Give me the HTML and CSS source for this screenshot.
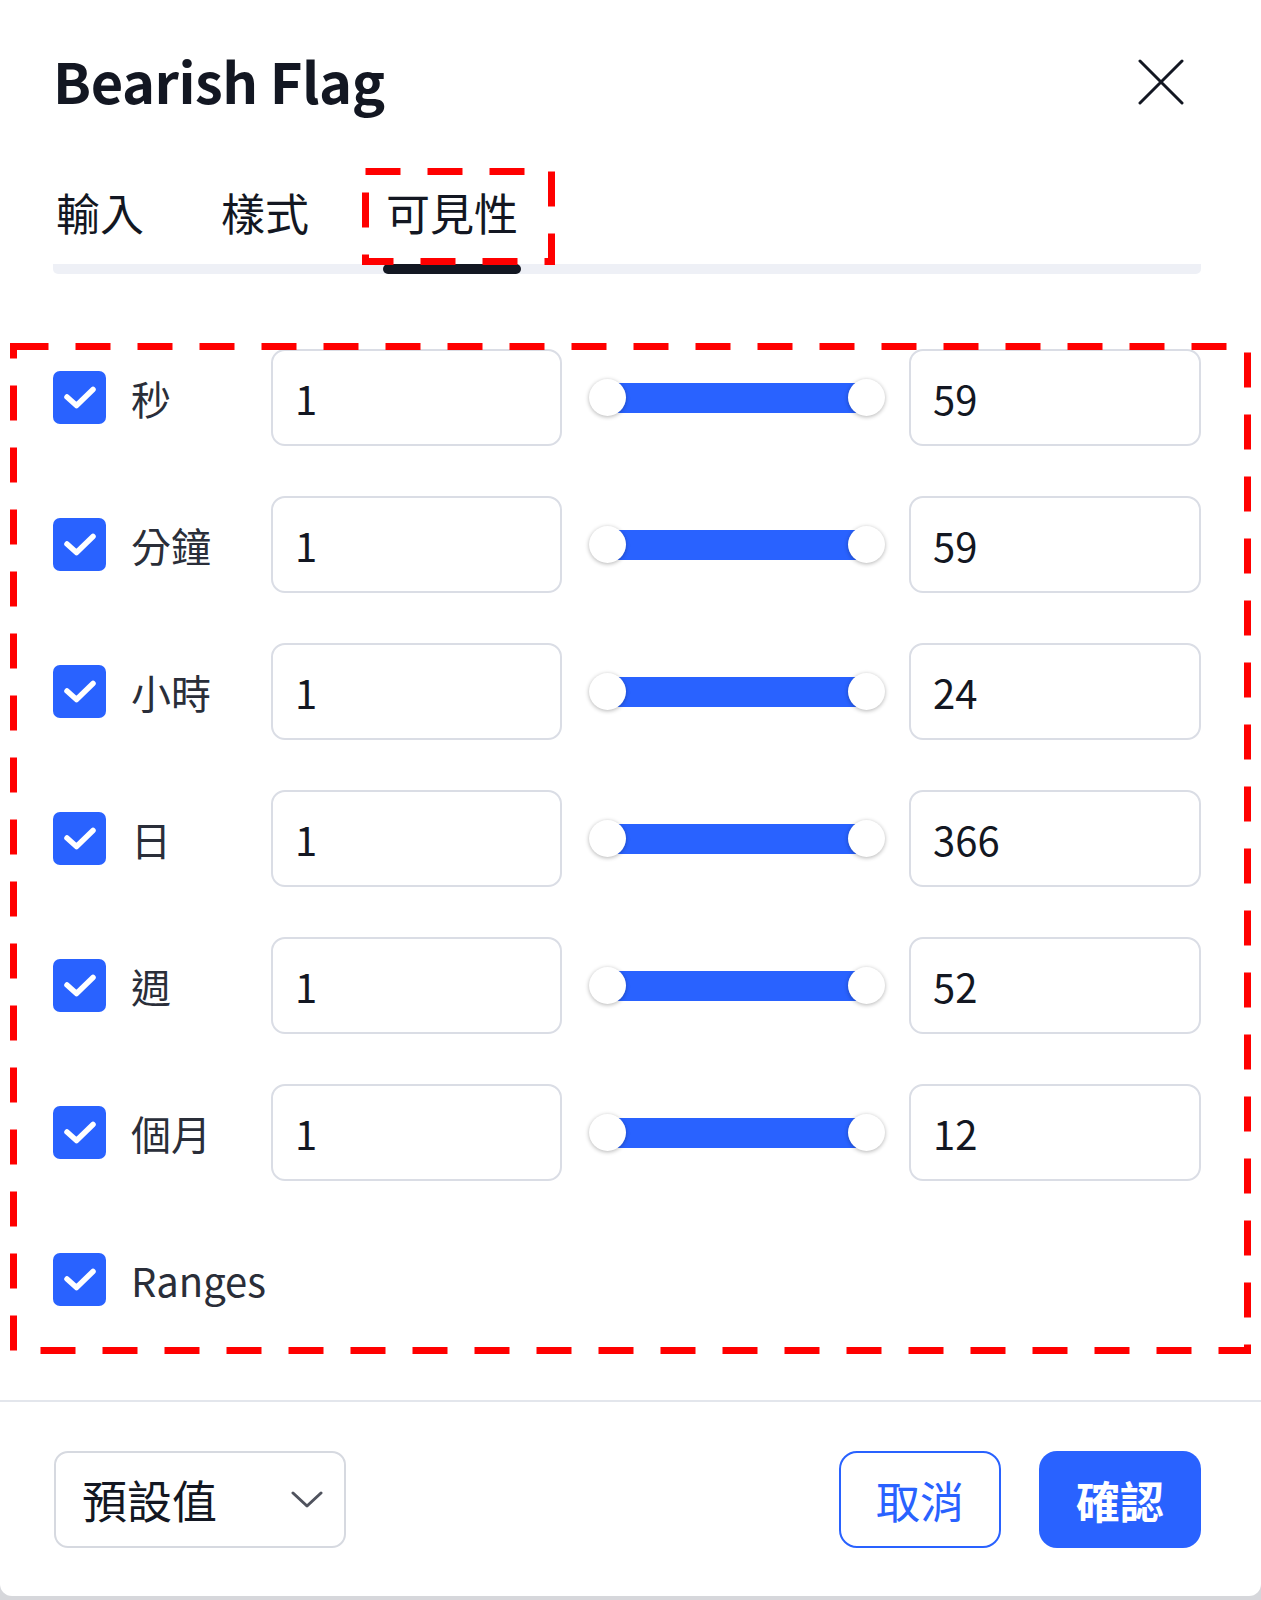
FILE: index.html
```html
<!DOCTYPE html>
<html lang="zh-Hant">
<head>
<meta charset="utf-8">
<title>Bearish Flag</title>
<link rel="stylesheet" href="styles.css">
</head>
<body>
<div class="card">
  <div class="body">
    <header class="header">
      <h1 class="title">Bearish Flag</h1>
      <svg class="close" viewBox="0 0 46 46"><path d="M2 2L44 44M44 2L2 44" stroke="#131722" stroke-width="3" stroke-linecap="round" fill="none"/></svg>
    </header>
    <nav class="tabbar">
      <div class="tab"><span class="tab-label">輸入</span><span class="tab-ind"></span></div>
      <div class="tab"><span class="tab-label">樣式</span><span class="tab-ind"></span></div>
      <div class="tab active"><span class="tab-label">可見性</span><span class="tab-ind"></span>
        <svg class="mark mark-tab" viewBox="0 0 193 97"><rect x="3.5" y="3.5" width="186" height="90" fill="none" stroke="#ff0000" stroke-width="7" stroke-dasharray="35 27"/></svg>
      </div>
    </nav>
    <section class="rows">
      <svg class="mark mark-rows" viewBox="0 0 1241 1011"><rect x="3.5" y="3.5" width="1234" height="1004" fill="none" stroke="#ff0000" stroke-width="7" stroke-dasharray="35 27"/></svg>
      <div class="row">
        <span class="cb"><svg viewBox="0 0 53 53"><polyline points="14,26 23.5,34.5 40,18.5" fill="none" stroke="#fff" stroke-width="5.5" stroke-linecap="round" stroke-linejoin="round"/></svg></span>
        <span class="label">秒</span>
        <div class="field">1</div>
        <div class="slider"><span class="thumb"></span><span class="bar"></span><span class="thumb"></span></div>
        <div class="field">59</div>
      </div>
      <div class="row">
        <span class="cb"><svg viewBox="0 0 53 53"><polyline points="14,26 23.5,34.5 40,18.5" fill="none" stroke="#fff" stroke-width="5.5" stroke-linecap="round" stroke-linejoin="round"/></svg></span>
        <span class="label">分鐘</span>
        <div class="field">1</div>
        <div class="slider"><span class="thumb"></span><span class="bar"></span><span class="thumb"></span></div>
        <div class="field">59</div>
      </div>
      <div class="row">
        <span class="cb"><svg viewBox="0 0 53 53"><polyline points="14,26 23.5,34.5 40,18.5" fill="none" stroke="#fff" stroke-width="5.5" stroke-linecap="round" stroke-linejoin="round"/></svg></span>
        <span class="label">小時</span>
        <div class="field">1</div>
        <div class="slider"><span class="thumb"></span><span class="bar"></span><span class="thumb"></span></div>
        <div class="field">24</div>
      </div>
      <div class="row">
        <span class="cb"><svg viewBox="0 0 53 53"><polyline points="14,26 23.5,34.5 40,18.5" fill="none" stroke="#fff" stroke-width="5.5" stroke-linecap="round" stroke-linejoin="round"/></svg></span>
        <span class="label">日</span>
        <div class="field">1</div>
        <div class="slider"><span class="thumb"></span><span class="bar"></span><span class="thumb"></span></div>
        <div class="field">366</div>
      </div>
      <div class="row">
        <span class="cb"><svg viewBox="0 0 53 53"><polyline points="14,26 23.5,34.5 40,18.5" fill="none" stroke="#fff" stroke-width="5.5" stroke-linecap="round" stroke-linejoin="round"/></svg></span>
        <span class="label">週</span>
        <div class="field">1</div>
        <div class="slider"><span class="thumb"></span><span class="bar"></span><span class="thumb"></span></div>
        <div class="field">52</div>
      </div>
      <div class="row">
        <span class="cb"><svg viewBox="0 0 53 53"><polyline points="14,26 23.5,34.5 40,18.5" fill="none" stroke="#fff" stroke-width="5.5" stroke-linecap="round" stroke-linejoin="round"/></svg></span>
        <span class="label">個月</span>
        <div class="field">1</div>
        <div class="slider"><span class="thumb"></span><span class="bar"></span><span class="thumb"></span></div>
        <div class="field">12</div>
      </div>
      <div class="row">
        <span class="cb"><svg viewBox="0 0 53 53"><polyline points="14,26 23.5,34.5 40,18.5" fill="none" stroke="#fff" stroke-width="5.5" stroke-linecap="round" stroke-linejoin="round"/></svg></span>
        <span class="label">Ranges</span>
      </div>
    </section>
  </div>
  <div class="sep"></div>
  <footer class="footer">
    <div class="select"><span>預設值</span><svg class="chev" viewBox="0 0 32 18"><polyline points="2,2 16,15 30,2" fill="none" stroke="#50535e" stroke-width="3" stroke-linecap="round" stroke-linejoin="round"/></svg></div>
    <div class="actions">
      <button class="btn btn-outline">取消</button>
      <button class="btn btn-primary">確認</button>
    </div>
  </footer>
</div>
</body>
</html>
```

FILE: styles.css
```css
html, body {
  margin: 0;
  padding: 0;
}

body {
  background: #d6d7db;
  font-family: "Noto Sans CJK TC", "Noto Sans", sans-serif;
  color: #131722;
}

.card {
  width: 1261px;
  height: 1596px;
  background: #fff;
  border-radius: 0 0 12px 12px;
  box-sizing: border-box;
  display: flex;
  flex-direction: column;
  overflow: hidden;
}

.body {
  padding: 50px 60px 0 53px;
}

.header {
  display: flex;
  justify-content: space-between;
  align-items: flex-start;
}

.title {
  margin: 0;
  font-size: 56px;
  line-height: 58px;
  font-weight: 700;
  letter-spacing: -0.5px;
  padding-top: 1px;
}

.close {
  width: 46px;
  height: 46px;
  margin-top: 9px;
  margin-right: 17px;
}

.tabbar {
  display: flex;
  gap: 71px;
  margin-top: 81px;
  background: linear-gradient(#eef0f6, #eef0f6) left bottom / 100% 10px no-repeat;
  border-radius: 0 0 5px 5px;
}

.tab {
  position: relative;
  display: flex;
  flex-direction: column;
}

.tab-label {
  padding: 0 3px;
  font-size: 44px;
  line-height: 44px;
  color: #131722;
}

.tab-ind {
  height: 10px;
  margin-top: 30px;
  border-radius: 5px;
}

.tab.active .tab-ind {
  background: #131722;
}

.mark {
  position: absolute;
  pointer-events: none;
  overflow: visible;
  z-index: 5;
}

.mark-tab {
  left: -21px;
  top: -22px;
  width: 193px;
  height: 97px;
}

.rows {
  position: relative;
  margin-top: 75px;
  display: flex;
  flex-direction: column;
  gap: 50px;
}

.mark-rows {
  left: -43px;
  top: -6px;
  width: 1241px;
  height: 1011px;
}

.row {
  display: grid;
  grid-template-columns: 78px 140px 291px 1fr 292px;
  align-items: center;
  height: 97px;
}

.cb {
  width: 53px;
  height: 53px;
  border-radius: 7px;
  background: #2962ff;
  display: flex;
}

.cb svg {
  width: 53px;
  height: 53px;
}

.label {
  font-size: 40px;
  line-height: 1;
  color: #2a2e39;
  white-space: nowrap;
}

.field {
  height: 97px;
  box-sizing: border-box;
  border: 2px solid #dadde5;
  border-radius: 14px;
  padding-left: 22px;
  display: flex;
  align-items: center;
  font-size: 40px;
  color: #131722;
}

.slider {
  display: flex;
  align-items: center;
  margin: 0 24px 0 27px;
}

.thumb {
  flex: none;
  width: 37px;
  height: 37px;
  border-radius: 50%;
  background: #fff;
  box-shadow: 0 1px 4px rgba(0, 0, 0, 0.3);
  position: relative;
  z-index: 1;
}

.bar {
  flex: 1;
  height: 30px;
  background: #2962ff;
  margin: 0 -18.5px;
}

.sep {
  height: 2px;
  background: #e3e6ec;
  margin-top: 72px;
}

.footer {
  display: flex;
  justify-content: space-between;
  padding: 49px 60px 0 54px;
}

.select {
  width: 292px;
  height: 97px;
  box-sizing: border-box;
  border: 2px solid #d6d9e0;
  border-radius: 14px;
  display: flex;
  align-items: center;
  justify-content: space-between;
  padding: 0 21px 0 26px;
  font-size: 45px;
  color: #131722;
}

.chev {
  width: 32px;
  height: 18px;
}

.actions {
  display: flex;
  gap: 38px;
}

.btn {
  width: 162px;
  height: 97px;
  box-sizing: border-box;
  border-radius: 18px;
  font-family: inherit;
  font-size: 44px;
  padding: 0;
  cursor: pointer;
}

.btn-outline {
  background: #fff;
  border: 2.5px solid #2962ff;
  color: #2962ff;
}

.btn-primary {
  background: #2962ff;
  border: none;
  color: #fff;
  font-weight: 700;
}
```
